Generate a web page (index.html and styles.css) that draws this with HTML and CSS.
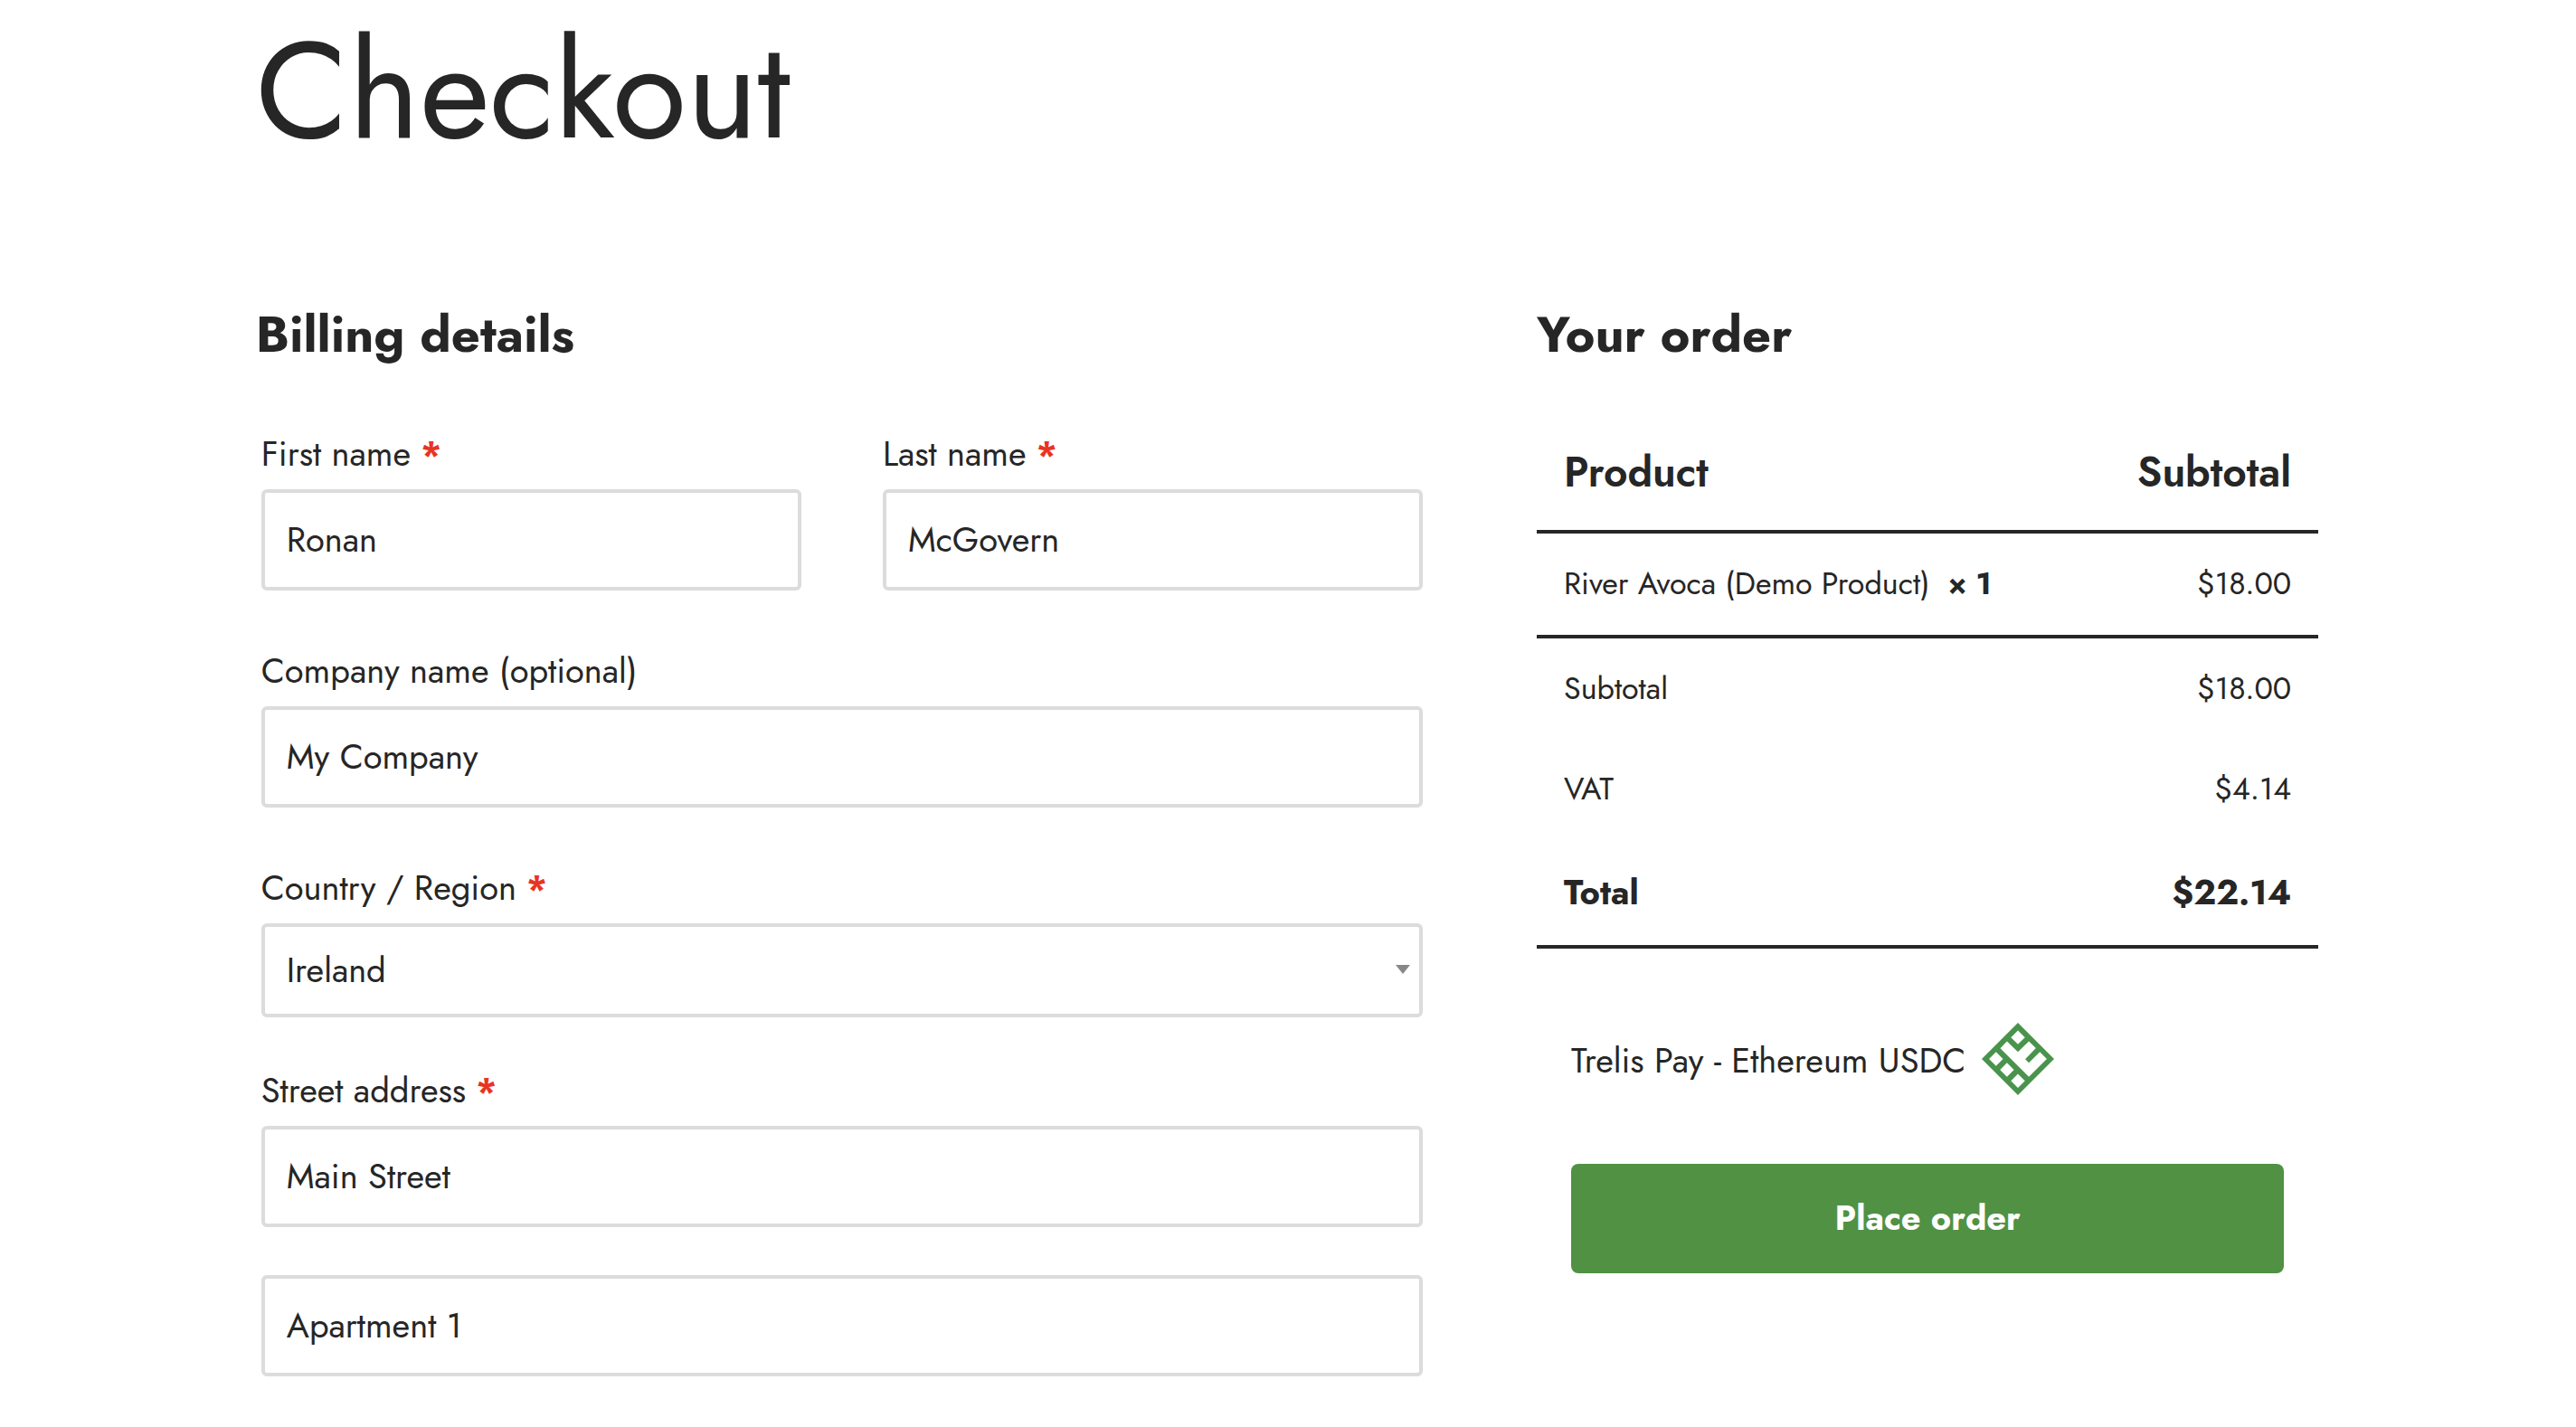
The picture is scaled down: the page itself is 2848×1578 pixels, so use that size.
FILE: index.html
```html
<!DOCTYPE html>
<html lang="en">
<head>
<meta charset="utf-8">
<meta name="viewport" content="width=device-width, initial-scale=1">
<title>Checkout</title>
<link rel="stylesheet" href="styles.css">
</head>
<body>
<main class="page">
  <h1 class="page-title">Checkout</h1>
  <form class="checkout">
    <section class="billing">
      <h2 class="section-title">Billing details</h2>
      <div class="fields">
        <div class="field-pair">
          <div class="field">
            <label class="label" for="first-name">First name <span class="required">*</span></label>
            <input class="control" id="first-name" type="text" value="Ronan">
          </div>
          <div class="field">
            <label class="label" for="last-name">Last name <span class="required">*</span></label>
            <input class="control" id="last-name" type="text" value="McGovern">
          </div>
        </div>
        <div class="field">
          <label class="label" for="company">Company name (optional)</label>
          <input class="control" id="company" type="text" value="My Company">
        </div>
        <div class="field field-country">
          <label class="label" for="country">Country / Region <span class="required">*</span></label>
          <div class="select-wrap">
            <select class="control control-select" id="country">
              <option selected>Ireland</option>
            </select>
            <svg class="select-arrow" viewBox="0 0 16 10" aria-hidden="true"><path d="M0 0h16L8 10z"/></svg>
          </div>
        </div>
        <div class="field field-address">
          <label class="label" for="address-1">Street address <span class="required">*</span></label>
          <input class="control" id="address-1" type="text" value="Main Street">
          <input class="control" type="text" value="Apartment 1" aria-label="Apartment">
        </div>
      </div>
    </section>
    <section class="order">
      <h2 class="section-title">Your order</h2>
      <table class="order-table">
        <thead>
          <tr><th scope="col">Product</th><th scope="col" class="amount">Subtotal</th></tr>
        </thead>
        <tbody>
          <tr><td>River Avoca (Demo Product)&nbsp; <strong>×&nbsp;1</strong></td><td class="amount">$18.00</td></tr>
        </tbody>
        <tfoot>
          <tr><th scope="row">Subtotal</th><td class="amount">$18.00</td></tr>
          <tr><th scope="row">VAT</th><td class="amount">$4.14</td></tr>
          <tr class="total"><th scope="row">Total</th><td class="amount">$22.14</td></tr>
        </tfoot>
      </table>
      <div class="payment">
        <div class="method">
          <span class="method-name">Trelis Pay - Ethereum USDC</span>
          <svg class="method-logo" viewBox="0 0 238 238" aria-hidden="true"><path fill-rule="evenodd" d="M119 0L238 119 119 238 0 119ZM119 25L96 48 119 71 142 48ZM47 96L24 119 47 142 70 119ZM83 132L60 155 83 178 106 155ZM119 168L96 191 119 214 142 191ZM61 84L83 61 119 96 155 61 178 83 143 120 155 132 191 96 214 119 155 178Z"/></svg>
        </div>
        <button class="place-order" type="submit">Place order</button>
      </div>
    </section>
  </form>
</main>
</body>
</html>
```
FILE: styles.css
```css
:root {
  --ink: #262626;
  --line: #dcdcdc;
  --green: #509144;
}

* {
  box-sizing: border-box;
}

body {
  margin: 0;
  background: #fff;
  color: var(--ink);
  font-family: Jost, Lato, sans-serif;
  font-size: 38px;
  line-height: 40px;
}

.page {
  padding: 0 10% 56px calc(10% - 2px);
}

.page-title {
  margin: 0 0 140px;
  font-size: 150px;
  font-weight: 400;
  line-height: 200px;
}

.checkout {
  display: grid;
  grid-template-columns: 3fr 2fr;
  column-gap: 120px;
  align-items: start;
}

.section-title {
  margin: 0 0 81px;
  font-size: 56px;
  font-weight: 700;
  line-height: 60px;
}

/* Billing form */
.fields {
  display: flex;
  flex-direction: column;
  gap: 68px;
  padding: 0 6px;
}

.field-pair {
  display: grid;
  grid-template-columns: 1fr 1fr;
  column-gap: 90px;
}

.field {
  display: flex;
  flex-direction: column;
}

.field-country {
  margin-bottom: -8px;
}

.field-address {
  row-gap: 53px;
}

.label {
  margin-bottom: 18px;
  line-height: 42px;
}

.field-address .label {
  margin-bottom: -35px;
}

.required {
  color: #e93323;
  font-weight: 700;
}

.control {
  width: 100%;
  height: 112px;
  padding: 0 24px 2px;
  border: 4px solid var(--line);
  border-radius: 6px;
  background: #fff;
  color: inherit;
  font: inherit;
}

.select-wrap {
  position: relative;
}

.control-select {
  display: block;
  height: 104px;
  padding-bottom: 0;
  appearance: none;
}

.select-arrow {
  position: absolute;
  top: 46px;
  right: 14px;
  width: 16px;
  height: 10px;
  fill: #888;
  pointer-events: none;
}

/* Order summary */
.order-table {
  width: 100%;
  border-collapse: separate;
  border-spacing: 0;
  font-size: 34px;
}

.order-table th,
.order-table td {
  padding: 36px 30px 35px;
  font-weight: 400;
  text-align: left;
}

.order-table thead th {
  padding-top: 17px;
  padding-bottom: 40px;
  border-bottom: 4px solid var(--ink);
  font-size: 46px;
  font-weight: 600;
  line-height: 48px;
}

.order-table tbody td {
  padding-bottom: 36px;
  border-bottom: 4px solid var(--ink);
}

.order-table .total th,
.order-table .total td {
  padding-top: 39px;
  padding-bottom: 38px;
  border-bottom: 4px solid var(--ink);
  font-size: 38px;
  font-weight: 700;
}

.order-table .amount {
  text-align: right;
}

.payment {
  padding: 82px 38px 0;
}

.method {
  display: flex;
  align-items: center;
  gap: 18px;
  margin-bottom: 76px;
}

.method-name {
  padding-top: 4px;
}

.method-logo {
  width: 80px;
  height: 80px;
  fill: #4a934d;
}

.place-order {
  display: block;
  width: 100%;
  padding: 40px 40px 41px;
  border: 0;
  border-radius: 8px;
  background: var(--green);
  color: #fff;
  font: inherit;
  font-weight: 700;
}
```
